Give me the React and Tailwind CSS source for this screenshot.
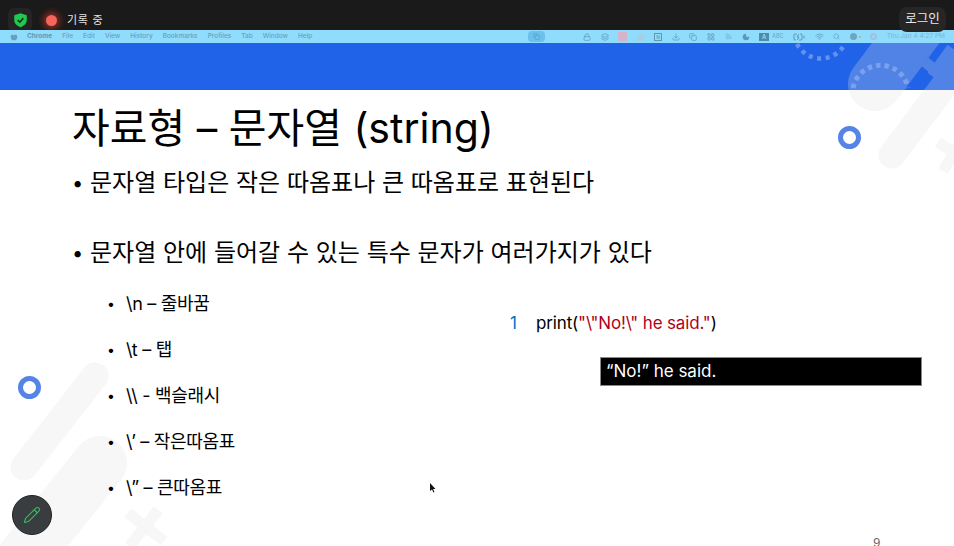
import React from "react";
import { Moon, Search, Wifi, Download, Pencil, Layers, LayoutGrid, MessageCircle, BatteryCharging, Apple, Lock, Copy } from "lucide-react";

const FONT = { fontFamily: '"Inter", "Noto Sans CJK KR", sans-serif' };

const menus = ["File", "Edit", "View", "History", "Bookmarks", "Profiles", "Tab", "Window", "Help"];
const subItems = ["\\n – 줄바꿈", "\\t – 탭", "\\\\ - 백슬래시", "\\’ – 작은따옴표", "\\” – 큰따옴표"];

const Decor = () => (
    <svg className="absolute left-0 top-[43px] pointer-events-none" width="954" height="503" viewBox="0 43 954 503">
        <g stroke="#e0e0e4" strokeLinecap="round" fill="none" opacity="0.25">
            <line x1="875" y1="84" x2="950" y2="-16" strokeWidth="54" />
            <line x1="892" y1="155" x2="980" y2="38" strokeWidth="27" />
            <line x1="95" y1="376" x2="24" y2="467" strokeWidth="27" />
            <line x1="100" y1="463" x2="-10" y2="600" strokeWidth="54" />
            <g strokeLinecap="butt" strokeWidth="11">
                <line x1="128" y1="513" x2="164" y2="541" />
                <line x1="158" y1="510" x2="130" y2="546" />
                <line x1="938" y1="142" x2="960" y2="157" />
                <line x1="962" y1="140" x2="943" y2="171" />
                <line x1="925" y1="62" x2="948" y2="80" />
                <line x1="952" y1="48" x2="932" y2="76" />
            </g>
        </g>
        <path d="M853 88 A 28 28 0 0 1 908 88" fill="none" stroke="#ffffff" strokeOpacity="0.25" strokeWidth="5" strokeDasharray="4.5 4" />
        <path d="M797 44 A 27 27 0 0 0 843 47" fill="none" stroke="#ffffff" strokeOpacity="0.3" strokeWidth="4.5" strokeDasharray="4 4.5" />
    </svg>
);

const MacBar = () => (
    <div className="flex h-[13px] items-center bg-[#8fdcfd] pl-[10px] pr-[9px] text-[6.5px] font-medium text-[#6a9fbc]">
        <Apple size={8} className="fill-[#6a9fbc]" strokeWidth={0} />
        <span className="ml-[9px] font-bold text-[#5f97b4]">Chrome</span>
        <div className="ml-[10px] flex gap-[10px]">
            {menus.map((m) => (
                <span key={m}>{m}</span>
            ))}
        </div>
        <div className="ml-auto flex items-center gap-[9.5px] text-[#5f97b4]">
            <div className="mr-[29px] flex h-[11px] w-[17px] items-center justify-center rounded-sm bg-[#6cc0ee]">
                <Copy size={7} />
            </div>
            <Lock size={8} />
            <Layers size={8} />
            <div className="h-[9px] w-[9px] bg-[#d3b4c8]" />
            <MessageCircle size={8} className="fill-[#a6cfe2] text-[#a6cfe2]" />
            <div className="h-[8px] w-[8px] border border-[#5f97b4] text-center text-[5px] leading-[6px]">N</div>
            <Download size={8} />
            <Copy size={8} />
            <LayoutGrid size={8} />
            <Wifi size={8} className="rotate-45 opacity-70" />
            <Moon size={8} className="fill-[#5f97b4]" />
            <div className="flex items-center gap-[3px]">
                <div className="h-[8px] w-[10px] bg-[#4f8cab] text-center text-[6px] leading-[8px] text-[#a8e0f8]">A</div>
                <span className="text-[5.5px] opacity-70">ABC</span>
            </div>
            <BatteryCharging size={12} />
            <Wifi size={9} />
            <Search size={7} />
            <div className="flex items-center gap-[2px]">
                <div className="h-[7px] w-[7px] rounded-full bg-[#6ea6c2]" />
                <div className="h-[2px] w-[2px] rounded-full bg-[#ee9a5c]" />
            </div>
            <div className="h-[7px] w-[7px] rounded-full border-2 border-[#a5bde0]" />
            <span className="font-normal text-[#7cb5d0]">Thu Jan 4  4:27 PM</span>
        </div>
    </div>
);

const Ring = ({ className }) => (
    <div className={`absolute h-[23px] w-[23px] rounded-full border-[5px] border-[#5583e6] ${className}`} />
);

export default function App() {
    return (
        <div className="relative flex h-[546px] w-[954px] flex-col overflow-hidden bg-white" style={FONT}>
            <div className="flex h-[30px] items-start justify-between bg-[#1a1a1a] px-[8px] pt-[8px]">
                <div className="flex items-center">
                    <div className="flex h-[24px] w-[24px] items-center justify-center rounded-md bg-[#242424]">
                        <svg width="15" height="16" viewBox="0 0 24 24">
                            <path d="M12 1 L22 4.5 V12 C22 18 17.5 21.5 12 23.5 C6.5 21.5 2 18 2 12 V4.5 Z" fill="#1fc94f" />
                            <path d="M7.5 12 L11 15.5 L16.5 9" fill="none" stroke="#10311c" strokeWidth="2.5" />
                        </svg>
                    </div>
                    <div className="ml-[14px] h-[11px] w-[11px] rounded-full bg-[#f4655c] shadow-[0_0_6px_3px_rgba(220,60,40,0.55)]" />
                    <span className="ml-[10px] text-[11px] tracking-[0.7px] text-[#e4e4e4]">기록 중</span>
                </div>
                <div className="relative z-10 -mt-[1px] flex h-[25px] w-[47px] items-center justify-center rounded-lg bg-[#262626] text-[12.5px] text-[#e8e8e8]">
                    로그인
                </div>
            </div>
            <MacBar />
            <div className="h-[47px] shrink-0 bg-[#2163e8]" />

            <Decor />
            <Ring className="left-[838px] top-[126px]" />
            <Ring className="left-[18px] top-[376px]" />

            <div className="relative flex flex-1 flex-col pl-[72px] text-black">
                <h1 className="mt-[8px] text-[41px] leading-[60px]">자료형 – 문자열 (string)</h1>
                <ul className="mt-[7px]">
                    <li className="flex h-[36px] items-center text-[24px]">
                        <span className="w-[18px] text-[20px]">•</span>문자열 타입은 작은 따옴표나 큰 따옴표로 표현된다
                    </li>
                    <li className="mt-[34px] flex h-[36px] items-center text-[24px]">
                        <span className="w-[18px] text-[20px]">•</span>문자열 안에 들어갈 수 있는 특수 문자가 여러가지가 있다
                    </li>
                </ul>
                <div className="mt-[19px] flex">
                    <ul className="w-[437px] pl-[35px]">
                        {subItems.map((item) => (
                            <li key={item} className="mb-[20px] flex h-[26px] items-center text-[18px] tracking-[-0.3px]">
                                <span className="w-[19px] text-[14px]">•</span>
                                {item}
                            </li>
                        ))}
                    </ul>
                    <div className="pt-[21px]">
                        <div className="flex h-[26px] items-center text-[17px] tracking-[-0.15px]">
                            <span className="w-[27px] pl-[1px] text-[#0070c0]">1</span>
                            <span>print(</span>
                            <span className="text-[#b00020]">"\"No!\" he said."</span>
                            <span>)</span>
                        </div>
                        <div className="ml-[91px] mt-[20px] flex h-[29px] w-[322px] items-center border border-[#8a8a8a] bg-black pl-[5px] text-[17px] text-white">
                            “No!” he said.
                        </div>
                    </div>
                </div>
            </div>

            <div className="absolute left-[12px] top-[495px] flex h-[40px] w-[40px] items-center justify-center rounded-full border border-[#222] bg-[#3a3d40]">
                <Pencil size={18} className="text-[#2bc25a]" strokeWidth={1.5} />
            </div>
            <svg className="absolute left-[429px] top-[483px]" width="7" height="10" viewBox="0 0 7 10">
                <path d="M1 0 L1 8 L3 6.5 L4.5 9.5 L5.5 9 L4 6 L6.5 6 Z" fill="#111" />
            </svg>
            <span className="absolute left-[873px] top-[534px] text-[12px] text-[#666]">9</span>
        </div>
    );
}
